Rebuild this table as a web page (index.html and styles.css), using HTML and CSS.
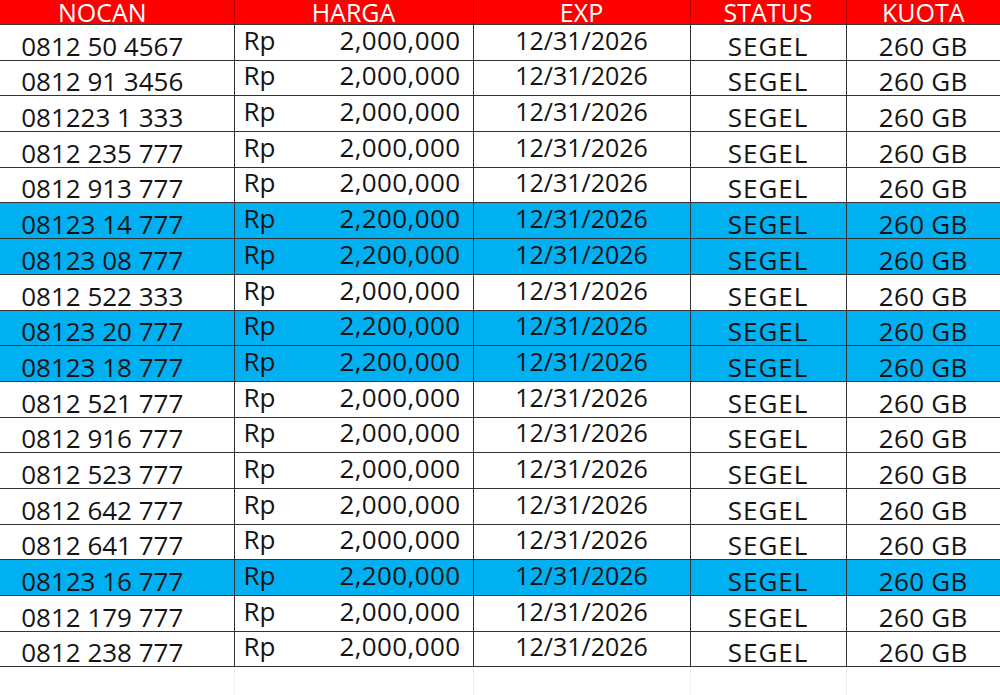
FILE: index.html
```html
<!DOCTYPE html>
<html>
<head>
<meta charset="utf-8">
<link rel="stylesheet" href="styles.css">
</head>
<body>
<table class="sheet">
  <colgroup>
    <col class="c-nocan"><col class="c-harga"><col class="c-exp"><col class="c-status"><col class="c-kuota">
  </colgroup>
  <thead>
    <tr class="head">
      <th class="nocan">NOCAN</th><th>HARGA</th><th>EXP</th><th>STATUS</th><th>KUOTA</th>
    </tr>
  </thead>
  <tbody>
    <tr><td class="nocan">0812 50 4567</td><td class="harga"><div class="price"><span>Rp</span><span>2,000,000</span></div></td><td class="exp">12/31/2026</td><td class="status">SEGEL</td><td class="kuota">260 GB</td></tr>
    <tr><td class="nocan">0812 91 3456</td><td class="harga"><div class="price"><span>Rp</span><span>2,000,000</span></div></td><td class="exp">12/31/2026</td><td class="status">SEGEL</td><td class="kuota">260 GB</td></tr>
    <tr><td class="nocan">081223 1 333</td><td class="harga"><div class="price"><span>Rp</span><span>2,000,000</span></div></td><td class="exp">12/31/2026</td><td class="status">SEGEL</td><td class="kuota">260 GB</td></tr>
    <tr><td class="nocan">0812 235 777</td><td class="harga"><div class="price"><span>Rp</span><span>2,000,000</span></div></td><td class="exp">12/31/2026</td><td class="status">SEGEL</td><td class="kuota">260 GB</td></tr>
    <tr><td class="nocan">0812 913 777</td><td class="harga"><div class="price"><span>Rp</span><span>2,000,000</span></div></td><td class="exp">12/31/2026</td><td class="status">SEGEL</td><td class="kuota">260 GB</td></tr>
    <tr class="hl"><td class="nocan">08123 14 777</td><td class="harga"><div class="price"><span>Rp</span><span>2,200,000</span></div></td><td class="exp">12/31/2026</td><td class="status">SEGEL</td><td class="kuota">260 GB</td></tr>
    <tr class="hl"><td class="nocan">08123 08 777</td><td class="harga"><div class="price"><span>Rp</span><span>2,200,000</span></div></td><td class="exp">12/31/2026</td><td class="status">SEGEL</td><td class="kuota">260 GB</td></tr>
    <tr><td class="nocan">0812 522 333</td><td class="harga"><div class="price"><span>Rp</span><span>2,000,000</span></div></td><td class="exp">12/31/2026</td><td class="status">SEGEL</td><td class="kuota">260 GB</td></tr>
    <tr class="hl"><td class="nocan">08123 20 777</td><td class="harga"><div class="price"><span>Rp</span><span>2,200,000</span></div></td><td class="exp">12/31/2026</td><td class="status">SEGEL</td><td class="kuota">260 GB</td></tr>
    <tr class="hl"><td class="nocan">08123 18 777</td><td class="harga"><div class="price"><span>Rp</span><span>2,200,000</span></div></td><td class="exp">12/31/2026</td><td class="status">SEGEL</td><td class="kuota">260 GB</td></tr>
    <tr><td class="nocan">0812 521 777</td><td class="harga"><div class="price"><span>Rp</span><span>2,000,000</span></div></td><td class="exp">12/31/2026</td><td class="status">SEGEL</td><td class="kuota">260 GB</td></tr>
    <tr><td class="nocan">0812 916 777</td><td class="harga"><div class="price"><span>Rp</span><span>2,000,000</span></div></td><td class="exp">12/31/2026</td><td class="status">SEGEL</td><td class="kuota">260 GB</td></tr>
    <tr><td class="nocan">0812 523 777</td><td class="harga"><div class="price"><span>Rp</span><span>2,000,000</span></div></td><td class="exp">12/31/2026</td><td class="status">SEGEL</td><td class="kuota">260 GB</td></tr>
    <tr><td class="nocan">0812 642 777</td><td class="harga"><div class="price"><span>Rp</span><span>2,000,000</span></div></td><td class="exp">12/31/2026</td><td class="status">SEGEL</td><td class="kuota">260 GB</td></tr>
    <tr><td class="nocan">0812 641 777</td><td class="harga"><div class="price"><span>Rp</span><span>2,000,000</span></div></td><td class="exp">12/31/2026</td><td class="status">SEGEL</td><td class="kuota">260 GB</td></tr>
    <tr class="hl"><td class="nocan">08123 16 777</td><td class="harga"><div class="price"><span>Rp</span><span>2,200,000</span></div></td><td class="exp">12/31/2026</td><td class="status">SEGEL</td><td class="kuota">260 GB</td></tr>
    <tr><td class="nocan">0812 179 777</td><td class="harga"><div class="price"><span>Rp</span><span>2,000,000</span></div></td><td class="exp">12/31/2026</td><td class="status">SEGEL</td><td class="kuota">260 GB</td></tr>
    <tr><td class="nocan">0812 238 777</td><td class="harga"><div class="price"><span>Rp</span><span>2,000,000</span></div></td><td class="exp">12/31/2026</td><td class="status">SEGEL</td><td class="kuota">260 GB</td></tr>
    <tr class="empty"><td></td><td></td><td></td><td></td><td></td></tr>
  </tbody>
</table>
</body>
</html>
```

FILE: styles.css
```css
html, body {
  margin: 0;
  padding: 0;
  background: #ffffff;
  overflow: hidden;
}

.sheet {
  width: 1000px;
  border-collapse: collapse;
  table-layout: fixed;
  font-family: "Open Sans", "Noto Sans", sans-serif;
  color: #141414;
}

.c-nocan { width: 234px; }
.c-harga { width: 239px; }
.c-exp { width: 217px; }
.c-status { width: 156px; }
.c-kuota { width: 154px; }

.head th {
  background: #fe0000;
  color: #ffffff;
  font-weight: 500;
  font-size: 25px;
  line-height: 24px;
  height: 24px;
  padding: 0;
  text-align: center;
  border-left: 1px solid #b30000;
  border-bottom: 1px solid #3a3a3a;
}

.head th:first-child { border-left: none; }

.head th.nocan { padding-right: 29px; }

tbody td {
  height: 35.7px;
  padding: 0;
  border-left: 1px solid #333333;
  border-bottom: 1px solid #333333;
  font-size: 26px;
  line-height: 26px;
  vertical-align: bottom;
  text-align: center;
  white-space: nowrap;
  box-sizing: border-box;
}

tbody td:first-child { border-left: none; }

tbody tr.hl td { background: #00b0f0; }

td.nocan {
  padding-right: 29px;
  padding-bottom: 1px;
}

td.harga {
  padding: 0 12px 7px 9px;
  font-size: 26px;
}

.price {
  display: flex;
  justify-content: space-between;
}

.price span + span { letter-spacing: 0.4px; }

td.exp {
  font-size: 25px;
  padding-bottom: 7px;
  padding-left: 0;
}

td.status {
  font-size: 26px;
  letter-spacing: 1px;
  padding-bottom: 1px;
}

td.kuota {
  font-size: 26px;
  letter-spacing: 0.3px;
  padding-bottom: 1px;
}

tbody tr.empty td {
  height: 40px;
  border-left: 1px solid #f0f0f0;
  border-bottom: none;
}

tbody tr.empty td:first-child { border-left: none; }
```
